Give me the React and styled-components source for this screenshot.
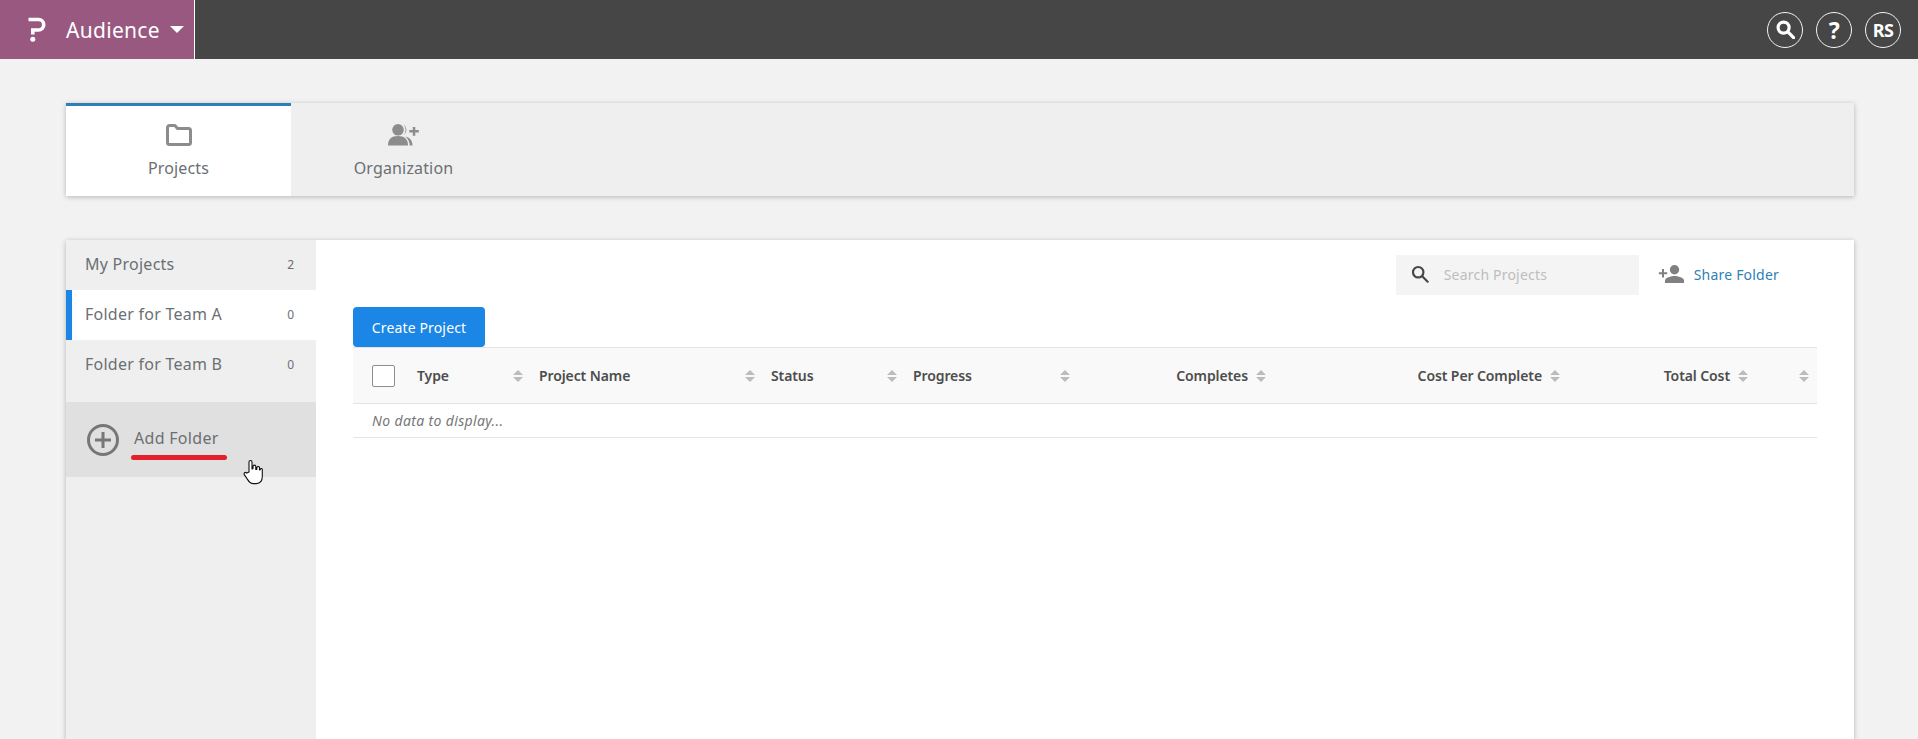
import styled, { createGlobalStyle } from 'styled-components';

const GlobalStyle = createGlobalStyle`
  html, body {
    margin: 0;
    height: 100%;
    overflow: hidden;
    background: #f2f2f2;
    font-family: "Noto Sans", "Open Sans", sans-serif;
  }
  * { box-sizing: border-box; }
`;

const Page = styled.div`
  height: 739px;
  overflow: hidden;
  display: flex;
  flex-direction: column;
`;

const TopBar = styled.header`
  height: 59px;
  flex: none;
  display: flex;
  align-items: center;
  justify-content: space-between;
  background: #464646;
  padding-right: 17px;
`;

const Brand = styled.div`
  width: 195px;
  height: 100%;
  display: flex;
  align-items: center;
  padding-left: 28px;
  color: #fff;
  background: #98587f;
  border-right: 1px solid #fff;
`;

const BrandName = styled.span`
  margin-left: 20px;
  font-size: 21px;
  letter-spacing: 0.3px;
`;

const Caret = styled.span`
  margin-left: 10px;
  width: 0;
  height: 0;
  border-left: 7px solid transparent;
  border-right: 7px solid transparent;
  border-top: 7px solid #fff;
`;

const TopActions = styled.div`
  display: flex;
  gap: 13px;
`;

const RoundButton = styled.div`
  width: 36px;
  height: 36px;
  border-radius: 50%;
  border: 1.5px solid #f4f4f4;
  display: flex;
  align-items: center;
  justify-content: center;
  color: #fff;
  font-size: ${({ $size }) => $size || 16}px;
  font-weight: 700;
  letter-spacing: -0.5px;
`;

const Content = styled.main`
  flex: 1;
  min-height: 0;
  display: flex;
  flex-direction: column;
  gap: 44px;
  padding: 44px 64px 0 66px;
`;

const TabBar = styled.nav`
  height: 93px;
  flex: none;
  display: flex;
  background: #efefef;
  box-shadow: 0 1px 5px rgba(0, 0, 0, 0.25);
`;

const Tab = styled.div`
  width: 225px;
  display: flex;
  flex-direction: column;
  align-items: center;
  padding-top: 18px;
  gap: 11px;
  color: #6b6f73;
  font-size: 16px;
  letter-spacing: 0.15px;
  background: ${({ $active }) => ($active ? '#fff' : 'transparent')};
  border-top: 3px solid ${({ $active }) => ($active ? '#2f7fb5' : 'transparent')};
`;

const Card = styled.section`
  flex: 1;
  min-height: 700px;
  display: flex;
  background: #fff;
  box-shadow: 0 1px 5px rgba(0, 0, 0, 0.25);
`;

const Sidebar = styled.aside`
  width: 250px;
  flex: none;
  background: #efefef;
`;

const FolderRow = styled.div`
  height: 50px;
  display: flex;
  align-items: center;
  justify-content: space-between;
  padding: 0 22px 2px ${({ $active }) => ($active ? '13px' : '19px')};
  font-size: 16px;
  letter-spacing: 0.25px;
  color: #6b6f73;
  background: ${({ $active }) => ($active ? '#fff' : 'transparent')};
  border-left: ${({ $active }) => ($active ? '6px solid #1b86e5' : '0')};
`;

const Count = styled.span`
  font-size: 12px;
  letter-spacing: 0;
`;

const AddFolder = styled.div`
  position: relative;
  height: 75px;
  margin-top: 12px;
  padding-left: 21px;
  display: flex;
  align-items: center;
  gap: 15px;
  background: #e0e0e0;
  color: #6b6f73;
  font-size: 16px;
  letter-spacing: 0.3px;
`;

const AddLabel = styled.span`
  margin-bottom: 4px;
`;

const RedLine = styled.span`
  position: absolute;
  left: 65px;
  top: 53px;
  width: 96px;
  height: 5px;
  border-radius: 3px;
  background: #e3202a;
`;

const HandCursor = styled.svg`
  position: absolute;
  left: 177px;
  top: 57px;
`;

const Panel = styled.div`
  flex: 1;
  padding: 15px 37px 0;
`;

const PanelTop = styled.div`
  display: flex;
  justify-content: flex-end;
  align-items: center;
  height: 40px;
  padding-right: 38px;
`;

const SearchBox = styled.div`
  width: 243px;
  height: 40px;
  display: flex;
  align-items: center;
  gap: 15px;
  padding: 0 0 2px 15px;
  background: #f4f4f4;
  color: #bdbdbd;
  font-size: 14px;
  letter-spacing: 0.2px;
`;

const ShareLink = styled.a`
  margin-left: 19px;
  padding-bottom: 2px;
  display: flex;
  align-items: center;
  gap: 10px;
  color: #2f7fb5;
  font-size: 14px;
  letter-spacing: 0.2px;
`;

const CreateButton = styled.button`
  display: block;
  width: 132px;
  height: 40px;
  margin-top: 12px;
  padding: 0;
  border: 0;
  border-radius: 4px;
  background: #1b86e5;
  color: #fff;
  font: inherit;
  font-size: 14px;
  letter-spacing: 0.15px;
`;

const HeadRow = styled.div`
  height: 57px;
  display: grid;
  grid-template-columns: 50px 122px 232px 142px 173px 196px 294px 188px 67px;
  background: #f9f9f9;
  border-top: 1px solid #e4e4e4;
  border-bottom: 1px solid #e4e4e4;
`;

const HeadCell = styled.div`
  display: flex;
  align-items: center;
  justify-content: ${({ $end }) => ($end ? 'flex-end' : 'space-between')};
  gap: 8px;
  padding: 0 ${({ $tail }) => ($tail ? 8 : 2)}px 0 14px;
  font-size: 14px;
  font-weight: 600;
  letter-spacing: -0.1px;
  color: #4d4d4d;
`;

const CheckCell = styled.div`
  display: flex;
  align-items: center;
  padding-left: 19px;
`;

const CheckBox = styled.span`
  width: 23px;
  height: 22px;
  background: #fff;
  border: 1px solid #8e8e8e;
  border-radius: 2px;
`;

const EmptyRow = styled.div`
  height: 34px;
  display: flex;
  align-items: center;
  padding-left: 19px;
  font-size: 14px;
  font-style: italic;
  letter-spacing: 0.35px;
  color: #777;
  border-bottom: 1px solid #e4e4e4;
`;

const SortMark = styled.span`
  display: flex;
  flex-direction: column;
  gap: 2px;
  &::before, &::after {
    content: '';
    width: 0;
    height: 0;
    border-left: 5px solid transparent;
    border-right: 5px solid transparent;
  }
  &::before { border-bottom: 5px solid #bcbcbc; }
  &::after { border-top: 5px solid #bcbcbc; }
`;

const LogoIcon = () => (
  <svg width="18" height="25" viewBox="0 0 18 25" fill="none">
    <path d="M0.500 2.500h10a5 5 0 0 1 0 10.500H4.800v4.500" stroke="#fff" strokeWidth="3.600" />
    <circle cx="4.800" cy="22.200" r="2.500" fill="#fff" />
  </svg>
);

const SearchIcon = ({ size, color, width }) => (
  <svg width={size} height={size} viewBox="0 0 20 20" fill="none" stroke={color} strokeWidth={width}>
    <circle cx="8" cy="8" r="5.800" />
    <path d="M12.500 12.500l6 6" strokeLinecap="round" />
  </svg>
);

const FolderIcon = () => (
  <svg width="26" height="22" viewBox="0 0 26 22" fill="none" stroke="#8c8c8c" strokeWidth="3">
    <path d="M1.500 3.500a2 2 0 0 1 2-2h5.500l2.500 3h11a2 2 0 0 1 2 2v12a2 2 0 0 1-2 2h-19a2 2 0 0 1-2-2z" strokeLinejoin="round" />
  </svg>
);

const TeamIcon = () => (
  <svg width="31" height="22" viewBox="0 0 31 22" fill="#8c8c8c">
    <circle cx="10" cy="5.800" r="5.800" />
    <path d="M0 21.500c0-6.500 3.500-9.500 10-9.500s10 3 10 9.500z" />
    <path d="M15.500 .6a6.500 6.500 0 0 1 0 10.800a8 8 0 0 0 0-10.800z" />
    <path d="M17.500 12.500c4.500 1 7 4 7 9h-2.800c0-3.500-1.500-6.500-4.200-9z" />
    <path d="M24.800 3h2.500v3h3.500v2.500h-3.500v3.200h-2.500V8.500h-3.500V6h3.500z" />
  </svg>
);

const ShareIcon = () => (
  <svg width="26" height="18" viewBox="0 0 26 18" fill="#808080">
    <circle cx="16.500" cy="4.700" r="4.700" />
    <path d="M7 18v-2.400c0-3.200 6.300-4.700 9.500-4.700s9.500 1.500 9.500 4.700v2.400z" />
    <path d="M4 4h2v3.200h3.200v2H6v3.200H4V9.200H.8v-2H4z" />
  </svg>
);

const PlusCircleIcon = () => (
  <svg width="32" height="32" viewBox="0 0 32 32" fill="none" stroke="#777" strokeWidth="3">
    <circle cx="16" cy="16" r="14.500" />
    <path d="M8 16h16M16 8v16" />
  </svg>
);

const columns = [
  { label: 'Type' },
  { label: 'Project Name' },
  { label: 'Status' },
  { label: 'Progress' },
  { label: 'Completes', end: true },
  { label: 'Cost Per Complete', end: true },
  { label: 'Total Cost', end: true },
];

const folders = [
  { name: 'My Projects', count: 2 },
  { name: 'Folder for Team A', count: 0, active: true },
  { name: 'Folder for Team B', count: 0 },
];

const App = () => (
  <Page>
    <GlobalStyle />
    <TopBar>
      <Brand>
        <LogoIcon />
        <BrandName>Audience</BrandName>
        <Caret />
      </Brand>
      <TopActions>
        <RoundButton><SearchIcon size={19} color="#fff" width={3.400} /></RoundButton>
        <RoundButton $size={23}>?</RoundButton>
        <RoundButton $size={18}>RS</RoundButton>
      </TopActions>
    </TopBar>
    <Content>
      <TabBar>
        <Tab $active><FolderIcon />Projects</Tab>
        <Tab><TeamIcon />Organization</Tab>
      </TabBar>
      <Card>
        <Sidebar>
          {folders.map((folder) => (
            <FolderRow key={folder.name} $active={folder.active}>
              {folder.name}
              <Count>{folder.count}</Count>
            </FolderRow>
          ))}
          <AddFolder>
            <PlusCircleIcon />
            <AddLabel>Add Folder</AddLabel>
            <RedLine />
            <HandCursor width="20" height="26" viewBox="0 0 20 26" fill="#fff" stroke="#111" strokeWidth="1.100" strokeLinejoin="round">
              <path d="M6 13V3a1.500 1.500 0 0 1 3 0v7l1-.2V7.500a1.400 1.400 0 0 1 2.800 0v3l1-.1V8.500a1.400 1.400 0 0 1 2.700 0v2.500l.8-.2V9.800a1.200 1.200 0 0 1 2 .8v7c0 4-2 7-6 7h-3c-3 0-4.500-2-6-4.500l-3-4.500c-1-1.500 1-3 2.500-1.500z" />
            </HandCursor>
          </AddFolder>
        </Sidebar>
        <Panel>
          <PanelTop>
            <SearchBox>
              <SearchIcon size={18} color="#464646" width={2.400} />
              Search Projects
            </SearchBox>
            <ShareLink><ShareIcon />Share Folder</ShareLink>
          </PanelTop>
          <CreateButton>Create Project</CreateButton>
          <HeadRow>
            <CheckCell><CheckBox /></CheckCell>
            {columns.map((column) => (
              <HeadCell key={column.label} $end={column.end}>
                {column.label}
                <SortMark />
              </HeadCell>
            ))}
            <HeadCell $end $tail><SortMark /></HeadCell>
          </HeadRow>
          <EmptyRow>No data to display...</EmptyRow>
        </Panel>
      </Card>
    </Content>
  </Page>
);

export default App;
